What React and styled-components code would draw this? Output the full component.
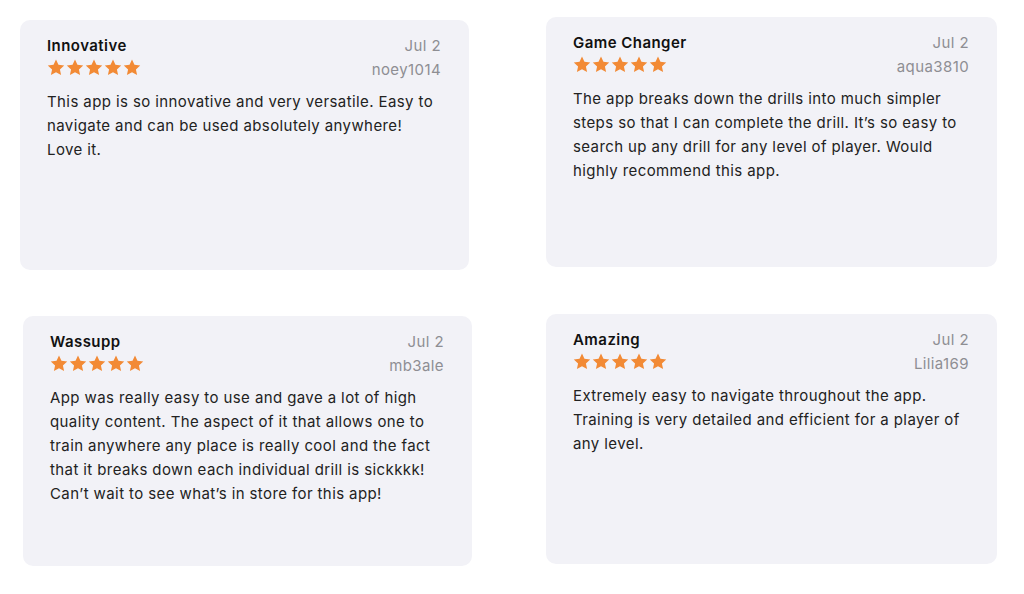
import React from "react"
import styled, { createGlobalStyle } from "styled-components"

const Global = createGlobalStyle`
  body {
    margin: 0;
    background: #ffffff;
    font-family: Inter, "Noto Sans", sans-serif;
  }
`

const Page = styled.main`
  display: grid;
  grid-template-columns: 452px 451px;
  column-gap: 74px;
  row-gap: 43px;
  align-items: start;
  padding: 17px 0 0 20px;
`

const Card = styled.section`
  box-sizing: border-box;
  width: ${(p) => p.$w}px;
  height: 250px;
  margin: ${(p) => p.$mt || 0}px 0 0 ${(p) => p.$ml || 0}px;
  padding: 16px 28px 0 27px;
  background: #f2f2f7;
  border-radius: 10px;
  color: #1c1c1e;
  letter-spacing: 0.4px;
`

const Header = styled.div`
  display: flex;
  justify-content: space-between;
`

const Left = styled.div`
  display: flex;
  flex-direction: column;
`

const Right = styled.div`
  display: flex;
  flex-direction: column;
  align-items: flex-end;
`

const Title = styled.div`
  font-size: 15px;
  font-weight: 600;
  line-height: 20px;
  color: #111;
  letter-spacing: 0.45px;
`

const Stars = styled.div`
  display: flex;
  gap: 1px;
  height: 22px;
  align-items: center;
`

const Meta = styled.div`
  font-size: 15px;
  line-height: 20px;
  color: #8e8e93;
  margin-top: ${(p) => p.$mt || 0}px;
`

const Body = styled.p`
  margin: 10px 0 0;
  font-size: 15px;
  line-height: 24px;
  color: #222;
`

const Star = () => (
  <svg width="18" height="17" viewBox="0 0 24 23">
    <path
      d="M12 0.8l3.3 7.1 7.8 0.9-5.8 5.3 1.6 7.7L12 17.9l-6.9 3.9 1.6-7.7L0.9 8.8l7.8-0.9z"
      fill="#f28a35"
    />
  </svg>
)

const reviews = [
  {
    title: "Innovative",
    user: "noey1014",
    text: "This app is so innovative and very versatile. Easy to navigate and can be used absolutely anywhere! Love it.",
    w: 449,
    mt: 3,
  },
  {
    title: "Game Changer",
    user: "aqua3810",
    text: "The app breaks down the drills into much simpler steps so that I can complete the drill. It\u2019s so easy to search up any drill for any level of player. Would highly recommend this app.",
    w: 451,
  },
  {
    title: "Wassupp",
    user: "mb3ale",
    text: "App was really easy to use and gave a lot of high quality content. The aspect of it that allows one to train anywhere any place is really cool and the fact that it breaks down each individual drill is sickkkk! Can\u2019t wait to see what\u2019s in store for this app!",
    w: 449,
    mt: 3,
    ml: 3,
  },
  {
    title: "Amazing",
    user: "Lilia169",
    text: "Extremely easy to navigate throughout the app. Training is very detailed and efficient for a player of any level.",
    w: 451,
    mt: 1,
  },
]

function App() {
  return (
    <>
      <Global />
      <Page>
        {reviews.map((r) => (
          <Card key={r.title} $w={r.w} $mt={r.mt} $ml={r.ml}>
            <Header>
              <Left>
                <Title>{r.title}</Title>
                <Stars>
                  {[0, 1, 2, 3, 4].map((i) => (
                    <Star key={i} />
                  ))}
                </Stars>
              </Left>
              <Right>
                <Meta>Jul 2</Meta>
                <Meta $mt={4}>{r.user}</Meta>
              </Right>
            </Header>
            <Body>{r.text}</Body>
          </Card>
        ))}
      </Page>
    </>
  )
}

export default App
